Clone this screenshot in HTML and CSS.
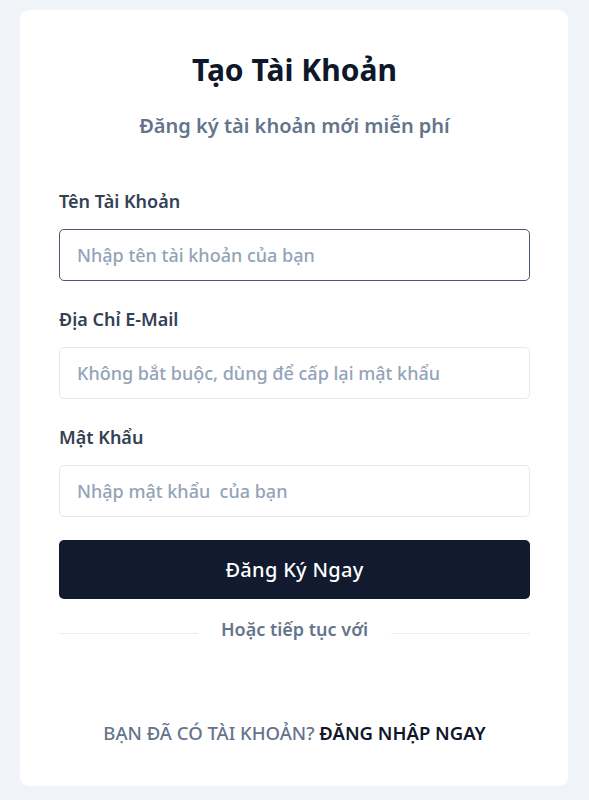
FILE: index.html
```html
<!DOCTYPE html>
<html lang="vi">
<head>
<meta charset="utf-8">
<link rel="stylesheet" href="styles.css">
</head>
<body>
<main class="card">
  <h1 class="title">Tạo Tài Khoản</h1>
  <p class="subtitle">Đăng ký tài khoản mới miễn phí</p>
  <form class="form">
    <label class="label label-first">Tên Tài Khoản</label>
    <div class="input input-focus"><span class="ph">Nhập tên tài khoản của bạn</span></div>
    <label class="label">Địa Chỉ E-Mail</label>
    <div class="input"><span class="ph">Không bắt buộc, dùng để cấp lại mật khẩu</span></div>
    <label class="label">Mật Khẩu</label>
    <div class="input"><span class="ph">Nhập mật khẩu&nbsp; của bạn</span></div>
    <button type="button" class="btn">Đăng Ký Ngay</button>
    <div class="divider"><span class="line"></span><span class="divider-text">Hoặc tiếp tục với</span><span class="line"></span></div>
  </form>
  <p class="footer">Bạn đã có tài khoản? <a class="footer-link">Đăng nhập ngay</a></p>
</main>
</body>
</html>
```

FILE: styles.css
```css
* { box-sizing: border-box; }
html, body { margin: 0; padding: 0; }
body {
  background: #f0f4f8;
  font-family: "Noto Sans", "Open Sans", sans-serif;
  padding: 10px 21px 14px 20px;
  min-height: 800px;
}
.card {
  background: #ffffff;
  border-radius: 9px;
  padding: 42px 38px 41px 39px;
  display: flex;
  flex-direction: column;
  height: 776px;
}
.title {
  margin: 0;
  text-align: center;
  font-size: 30px;
  line-height: 36px;
  font-weight: 700;
  color: #0f172a;
}
.subtitle {
  margin: 25px 0 0;
  text-align: center;
  font-size: 20px;
  line-height: 26px;
  font-weight: 600;
  color: #64748b;
}
.form {
  display: flex;
  flex-direction: column;
  margin-top: 50px;
}
.label {
  font-size: 18px;
  line-height: 24px;
  font-weight: 600;
  color: #334155;
  margin-top: 26px;
}
.label-first { margin-top: 0; }
.input {
  margin-top: 16px;
  height: 52px;
  border: 1px solid #e2e8f0;
  border-radius: 5px;
  display: flex;
  align-items: center;
  padding-left: 17px;
}
.input-focus { border: 1.5px solid #4b5a70; }
.ph {
  font-size: 18px;
  color: #94a3b8;
  font-weight: 500;
}
.btn {
  margin-top: 23px;
  height: 59px;
  border: none;
  border-radius: 5px;
  background: #111a2e;
  color: #ffffff;
  font-family: "Noto Sans", sans-serif;
  font-size: 20px;
  font-weight: 500;
  letter-spacing: 0.3px;
}
.divider {
  margin-top: 18px;
  display: flex;
  align-items: center;
  gap: 23px;
  height: 24px;
}
.line {
  flex: 1;
  height: 1px;
  background: #e8edf3;
  margin-top: 8px;
}
.divider-text {
  font-size: 18px;
  line-height: 24px;
  font-weight: 600;
  color: #64748b;
}
.footer {
  margin: auto 0 0;
  text-align: center;
  font-size: 18.5px;
  line-height: 24px;
  font-weight: 500;
  color: #64748b;
  text-transform: uppercase;
}
.footer-link {
  color: #0f172a;
  font-weight: 600;
}
```
